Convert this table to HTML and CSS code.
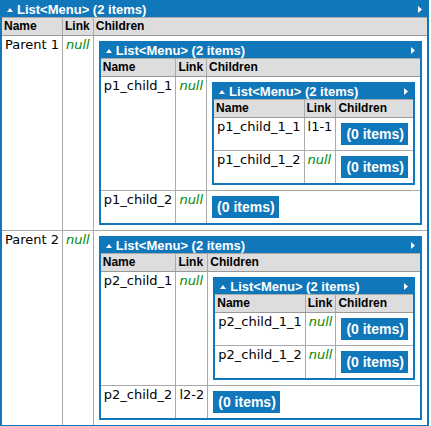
FILE: index.html
```html
<!DOCTYPE html>
<html>
<head>
<meta charset="utf-8">
<link rel="stylesheet" href="styles.css">
</head>
<body>
<table class="t outer">
  <thead>
    <tr><td class="typeheader" colspan="3"><div class="th-in"><span class="ttl"><svg class="up" width="6" height="4" viewBox="0 0 6 4"><path d="M0 4 L3 0 L6 4 Z" fill="#fff"/></svg>List&lt;Menu&gt; (2 items)</span><svg class="rt" width="4" height="7" viewBox="0 0 4 7"><path d="M0 0 L4 3.5 L0 7 Z" fill="#fff"/></svg></div></td></tr>
    <tr><th>Name</th><th>Link</th><th>Children</th></tr>
  </thead>
  <tbody>
    <tr>
      <td>Parent 1</td><td><i>null</i></td>
      <td>
        <table class="t">
          <thead>
            <tr><td class="typeheader" colspan="3"><div class="th-in"><span class="ttl"><svg class="up" width="6" height="4" viewBox="0 0 6 4"><path d="M0 4 L3 0 L6 4 Z" fill="#fff"/></svg>List&lt;Menu&gt; (2 items)</span><svg class="rt" width="4" height="7" viewBox="0 0 4 7"><path d="M0 0 L4 3.5 L0 7 Z" fill="#fff"/></svg></div></td></tr>
            <tr><th>Name</th><th>Link</th><th>Children</th></tr>
          </thead>
          <tbody>
            <tr>
              <td>p1_child_1</td><td><i>null</i></td>
              <td>
                <table class="t">
                  <thead>
                    <tr><td class="typeheader" colspan="3"><div class="th-in"><span class="ttl"><svg class="up" width="6" height="4" viewBox="0 0 6 4"><path d="M0 4 L3 0 L6 4 Z" fill="#fff"/></svg>List&lt;Menu&gt; (2 items)</span><svg class="rt" width="4" height="7" viewBox="0 0 4 7"><path d="M0 0 L4 3.5 L0 7 Z" fill="#fff"/></svg></div></td></tr>
                    <tr><th>Name</th><th>Link</th><th>Children</th></tr>
                  </thead>
                  <tbody>
                    <tr><td>p1_child_1_1</td><td>l1-1</td><td><table class="t empty"><tr><td class="typeheader">(0 items)</td></tr></table></td></tr>
                    <tr><td>p1_child_1_2</td><td><i>null</i></td><td><table class="t empty"><tr><td class="typeheader">(0 items)</td></tr></table></td></tr>
                  </tbody>
                </table>
              </td>
            </tr>
            <tr><td>p1_child_2</td><td><i>null</i></td><td><table class="t empty"><tr><td class="typeheader">(0 items)</td></tr></table></td></tr>
          </tbody>
        </table>
      </td>
    </tr>
    <tr>
      <td>Parent 2</td><td><i>null</i></td>
      <td>
        <table class="t">
          <thead>
            <tr><td class="typeheader" colspan="3"><div class="th-in"><span class="ttl"><svg class="up" width="6" height="4" viewBox="0 0 6 4"><path d="M0 4 L3 0 L6 4 Z" fill="#fff"/></svg>List&lt;Menu&gt; (2 items)</span><svg class="rt" width="4" height="7" viewBox="0 0 4 7"><path d="M0 0 L4 3.5 L0 7 Z" fill="#fff"/></svg></div></td></tr>
            <tr><th>Name</th><th>Link</th><th>Children</th></tr>
          </thead>
          <tbody>
            <tr>
              <td>p2_child_1</td><td><i>null</i></td>
              <td>
                <table class="t">
                  <thead>
                    <tr><td class="typeheader" colspan="3"><div class="th-in"><span class="ttl"><svg class="up" width="6" height="4" viewBox="0 0 6 4"><path d="M0 4 L3 0 L6 4 Z" fill="#fff"/></svg>List&lt;Menu&gt; (2 items)</span><svg class="rt" width="4" height="7" viewBox="0 0 4 7"><path d="M0 0 L4 3.5 L0 7 Z" fill="#fff"/></svg></div></td></tr>
                    <tr><th>Name</th><th>Link</th><th>Children</th></tr>
                  </thead>
                  <tbody>
                    <tr><td>p2_child_1_1</td><td><i>null</i></td><td><table class="t empty"><tr><td class="typeheader">(0 items)</td></tr></table></td></tr>
                    <tr><td>p2_child_1_2</td><td><i>null</i></td><td><table class="t empty"><tr><td class="typeheader">(0 items)</td></tr></table></td></tr>
                  </tbody>
                </table>
              </td>
            </tr>
            <tr><td>p2_child_2</td><td>l2-2</td><td><table class="t empty"><tr><td class="typeheader">(0 items)</td></tr></table></td></tr>
          </tbody>
        </table>
      </td>
    </tr>
  </tbody>
</table>
</body>
</html>
```

FILE: styles.css
```css
body {
  margin: 0;
  font-family: "DejaVu Sans", Verdana, sans-serif;
  font-size: 13px;
  color: #000;
  background: #fff;
}
table.t {
  border-collapse: collapse;
  border: 2px solid #17b;
  margin: 4px 2px;
}
table.outer {
  margin: 0;
}
td, th {
  vertical-align: top;
  border: 1px solid #aaa;
  padding: 1px 3px;
  text-align: left;
  line-height: 15px;
}
th {
  background: #ddd;
  border-bottom-color: #999;
  font-family: "Liberation Sans", Arial, sans-serif;
  font-weight: bold;
  font-size: 12px;
  padding: 1px 2px;
}
td.typeheader {
  background: #17b;
  color: #fff;
  font-family: "Liberation Sans", Arial, sans-serif;
  font-weight: bold;
  font-size: 13px;
  padding: 0 5px 0 5px;
  border: none;
}
.th-in {
  display: flex;
  justify-content: space-between;
  align-items: center;
}
.ttl {
  display: flex;
  align-items: center;
}
.up {
  margin: 0 4px 0 0;
}
.rt {
  margin-left: 12px;
}
table.empty {
  margin: 4px 2px;
}
table.empty td.typeheader {
  font-size: 14px;
  line-height: 16px;
  padding: 1px 2px 1px 3px;
}
i {
  color: #080;
}
```
